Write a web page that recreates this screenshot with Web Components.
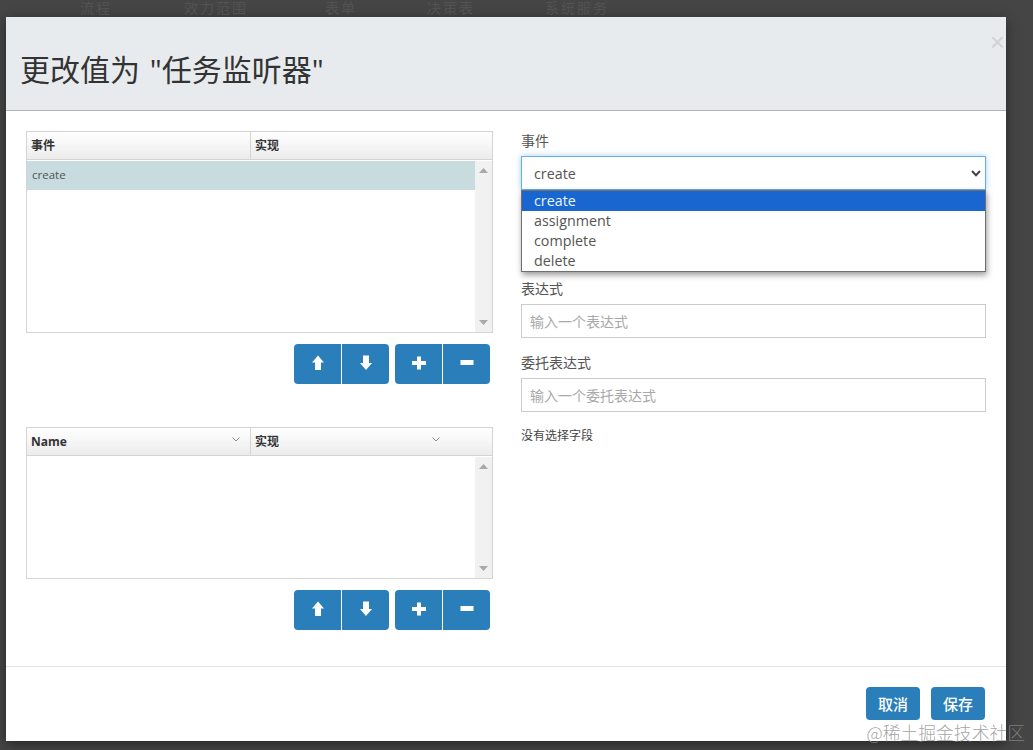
<!DOCTYPE html>
<html lang="zh">
<head>
<meta charset="utf-8">
<title>任务监听器</title>
<style>
  html, body { margin: 0; height: 100%; }
  body {
    background: #454545;
    font-family: "Open Sans", "Noto Sans CJK SC", sans-serif;
    overflow: hidden;
  }
</style>
</head>
<body>
<modal-backdrop>
  <span>流程</span><span>效力范围</span><span>表单</span><span>决策表</span><span>系统服务</span>
</modal-backdrop>
<listener-modal></listener-modal>

<script>
const ICONS = {
  up: `<path d="M7 .5 13 7.5H10V15H4V7.5H1Z"/>`,
  down: `<path d="M4 .5H10V8H13L7 15 1 8H4Z"/>`,
  plus: `<path d="M5 1.5H9V6H14V10H9V14.5H5V10H0V6H5Z"/>`,
  minus: `<path d="M.5 5H13.5V10H.5Z"/>`,
};

class ModalBackdrop extends HTMLElement {
  constructor() {
    super();
    this.attachShadow({ mode: "open" }).innerHTML = `
      <style>
        :host {
          display: flex;
          gap: 72px;
          box-sizing: border-box;
          height: 17px;
          padding-left: 80px;
          font: 14px/16px "Liberation Sans", "Noto Sans CJK SC", sans-serif;
          letter-spacing: 2px;
          color: #525252;
        }
        ::slotted(:nth-child(3)) { margin-left: 5px; }
        ::slotted(:nth-child(4)) { margin-left: -2px; }
        ::slotted(:nth-child(5)) { margin-left: -2px; }
      </style>
      <slot></slot>`;
  }
}

class IconButtons extends HTMLElement {
  constructor() {
    super();
    const group = (a, b) => `
      <div class="group">
        <button><svg viewBox="0 0 14 15" width="14" height="15" fill="#fff">${ICONS[a]}</svg></button>
        <button><svg viewBox="0 0 14 15" width="14" height="15" fill="#fff">${ICONS[b]}</svg></button>
      </div>`;
    this.attachShadow({ mode: "open" }).innerHTML = `
      <style>
        :host { display: flex; justify-content: flex-end; gap: 6px; padding-right: 3px; }
        .group { display: flex; gap: 1px; }
        button {
          width: 47px;
          height: 40px;
          border: 0;
          padding: 0 0 3px 0;
          background: #2a7fba;
          display: flex;
          align-items: center;
          justify-content: center;
        }
        button:first-child { border-radius: 4px 0 0 4px; }
        button:last-child { border-radius: 0 4px 4px 0; }
      </style>
      ${group("up", "down")}${group("plus", "minus")}`;
  }
}

class ListGrid extends HTMLElement {
  static observedAttributes = ["sortable", "first"];

  constructor() {
    super();
    this.attachShadow({ mode: "open" });
  }

  connectedCallback() {
    const first = this.getAttribute("first");
    const sortable = this.hasAttribute("sortable");
    const chevron = (right) => sortable
      ? `<svg class="chev" style="right:${right}px" width="8" height="5" viewBox="0 0 8 5"><path d="M.5.5 4 4 7.5.5" fill="none" stroke="#888"/></svg>`
      : "";
    this.shadowRoot.innerHTML = `
      <style>
        :host {
          display: flex;
          flex-direction: column;
          box-sizing: border-box;
          height: var(--grid-height, 202px);
          border: 1px solid #d4d4d4;
          font-size: 12px;
          color: #333;
        }
        .head {
          display: grid;
          grid-template-columns: 223px 1fr;
          height: 27px;
          flex: none;
          border-bottom: 1px solid #d4d4d4;
          background: linear-gradient(#fff, #ececec);
          font-weight: 700;
        }
        .head div { position: relative; padding-left: 4px; line-height: 27px; }
        .head div + div { border-left: 1px solid #d4d4d4; }
        .chev { position: absolute; top: 9px; }
        .body { flex: 1; display: flex; min-height: 0; padding-top: 1px; }
        .rows { flex: 1; }
        .bar {
          width: 17px;
          background: #f1f1f1;
          display: flex;
          flex-direction: column;
          justify-content: space-between;
          align-items: center;
          padding: 7px 0;
        }
        .bar svg { display: block; }
        ::slotted(grid-row) { display: block; }
      </style>
      <div class="head">
        <div>${first}${chevron(10)}</div>
        <div>实现${chevron(52)}</div>
      </div>
      <div class="body">
        <div class="rows"><slot></slot></div>
        <div class="bar">
          <svg width="9" height="5" viewBox="0 0 9 5"><path d="M4.5 0 9 5H0Z" fill="#a9a9a9"/></svg>
          <svg width="9" height="5" viewBox="0 0 9 5"><path d="M0 0H9L4.5 5Z" fill="#a9a9a9"/></svg>
        </div>
      </div>`;
  }
}

class GridRow extends HTMLElement {
  constructor() {
    super();
    this.attachShadow({ mode: "open" }).innerHTML = `
      <style>
        :host {
          display: block;
          height: 29px;
          line-height: 27px;
          padding-left: 5px;
          background: #c8dce0;
          font-size: 11.5px;
          color: #4a5557;
        }
      </style>
      <slot></slot>`;
  }
}

class FormField extends HTMLElement {
  static observedAttributes = ["label", "placeholder"];

  constructor() {
    super();
    this.attachShadow({ mode: "open" });
  }

  connectedCallback() {
    this.shadowRoot.innerHTML = `
      <style>
        :host { display: block; font-size: 14px; color: #555; }
        label { display: block; height: 23px; line-height: 16px; }
        .input {
          box-sizing: border-box;
          height: 34px;
          border: 1px solid #ccc;
          padding: 0 8px;
          line-height: 33px;
          color: #a9a9a9;
        }
      </style>
      <label>${this.getAttribute("label")}</label>
      <div class="input">${this.getAttribute("placeholder")}</div>`;
  }
}

class SelectField extends HTMLElement {
  constructor() {
    super();
    const options = ["create", "assignment", "complete", "delete"];
    this.attachShadow({ mode: "open" }).innerHTML = `
      <style>
        :host { display: block; position: relative; font-size: 14.3px; color: #555; }
        label { display: block; height: 23px; line-height: 16px; font-size: 14px; }
        .select {
          box-sizing: border-box;
          height: 34px;
          border: 1px solid #66afe9;
          box-shadow: 0 0 6px rgba(102, 175, 233, .6);
          padding: 0 12px;
          line-height: 33px;
          position: relative;
        }
        .select svg { position: absolute; right: 4px; top: 13px; }
        .menu {
          position: absolute;
          left: 0;
          right: 0;
          top: 57px;
          height: 82px;
          box-sizing: border-box;
          border: 1px solid #6f6f6f;
          background: #fff;
          box-shadow: 1px 3px 6px rgba(0, 0, 0, .4);
          z-index: 2;
        }
        .menu div { height: 20px; line-height: 19px; padding-left: 12px; }
        .menu div:first-child { background: #1a66d0; color: #e8f5ff; }
      </style>
      <label>事件</label>
      <div class="select">create
        <svg width="10" height="7" viewBox="0 0 10 7"><path d="M1 1 5 5.2 9 1" fill="none" stroke="#444" stroke-width="2"/></svg>
      </div>
      <div class="menu">${options.map((o) => `<div>${o}</div>`).join("")}</div>`;
  }
}

class ListenerModal extends HTMLElement {
  constructor() {
    super();
    this.attachShadow({ mode: "open" }).innerHTML = `
      <style>
        :host {
          display: flex;
          flex-direction: column;
          box-sizing: border-box;
          width: 1000px;
          height: 724px;
          margin-left: 6px;
          background: #fff;
          box-shadow: 0 3px 12px rgba(0, 0, 0, .45);
          color: #333;
        }
        header {
          position: relative;
          box-sizing: border-box;
          height: 94px;
          flex: none;
          padding: 32px 14px 0;
          background: #e8ebee;
          border-bottom: 1px solid #b4b4b4;
        }
        h1 { margin: 0; font-size: 30px; line-height: 42px; font-weight: 400; color: #333; word-spacing: 2px; }
        .close {
          position: absolute;
          right: 1px;
          top: 12px;
          font: 400 26px/26px "Liberation Sans", sans-serif;
          color: #d0d3d6;
        }
        main {
          flex: 1;
          display: grid;
          grid-template-columns: 467px 465px;
          gap: 28px;
          padding: 20px 20px 0;
          min-height: 0;
        }
        .left, .right { display: flex; flex-direction: column; }
        .left icon-buttons { margin-top: 11px; }
        .second { margin-top: 43px; --grid-height: 152px; }
        .right { padding-top: 2px; }
        .spaced-a { margin-top: 91px; }
        .spaced-b { margin-top: 17px; }
        .none { margin-top: 16px; font-size: 12px; color: #444; line-height: 16px; }
        footer {
          flex: none;
          box-sizing: border-box;
          height: 75px;
          border-top: 1px solid #e5e5e5;
          display: flex;
          justify-content: flex-end;
          gap: 11px;
          padding: 20px 21px 0 0;
        }
        button {
          width: 54px;
          height: 33px;
          border: 0;
          border-radius: 4px;
          padding: 0;
          background: #2a7fba;
          color: #fff;
          font: 500 15px "Noto Sans CJK SC", sans-serif;
        }
        .mark {
          position: absolute;
          right: 8px;
          bottom: 5px;
          font: 300 17.8px "Noto Sans CJK SC", sans-serif;
          color: rgba(140, 140, 140, .8);
          z-index: 3;
        }
      </style>
      <header>
        <h1>更改值为 "任务监听器"</h1>
        <span class="close">×</span>
      </header>
      <main>
        <div class="left">
          <list-grid first="事件"><grid-row>create</grid-row></list-grid>
          <icon-buttons></icon-buttons>
          <list-grid class="second" first="Name" sortable></list-grid>
          <icon-buttons></icon-buttons>
        </div>
        <div class="right">
          <select-field></select-field>
          <form-field class="spaced-a" label="表达式" placeholder="输入一个表达式"></form-field>
          <form-field class="spaced-b" label="委托表达式" placeholder="输入一个委托表达式"></form-field>
          <div class="none">没有选择字段</div>
        </div>
      </main>
      <footer>
        <button>取消</button>
        <button>保存</button>
      </footer>
      <span class="mark">@稀土掘金技术社区</span>`;
  }
}

customElements.define("modal-backdrop", ModalBackdrop);
customElements.define("icon-buttons", IconButtons);
customElements.define("list-grid", ListGrid);
customElements.define("grid-row", GridRow);
customElements.define("form-field", FormField);
customElements.define("select-field", SelectField);
customElements.define("listener-modal", ListenerModal);
</script>
</body>
</html>
